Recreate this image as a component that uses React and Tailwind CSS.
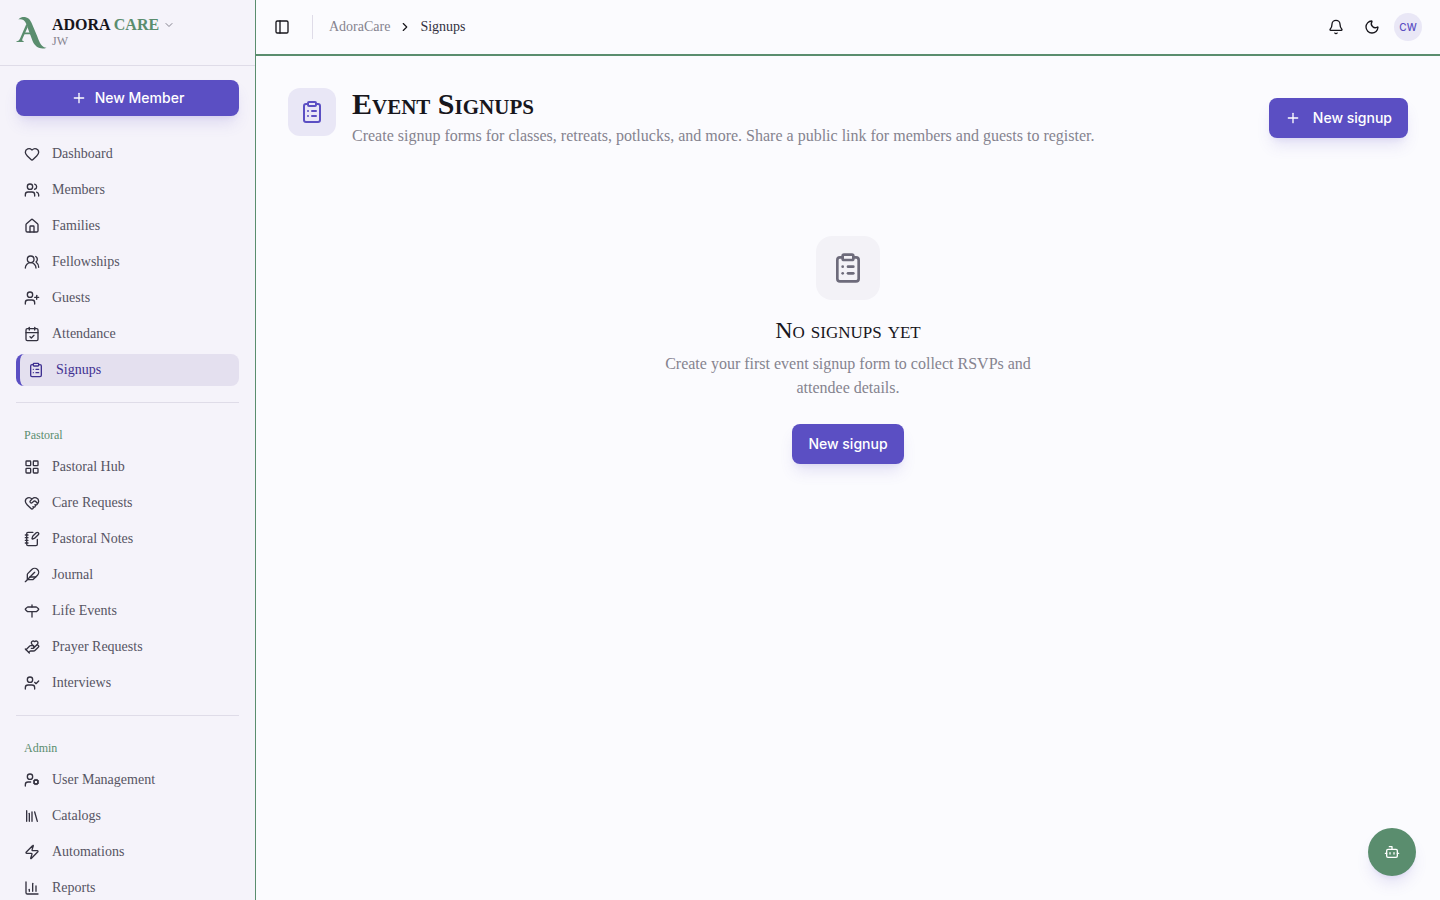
import React from 'react'
import {
  Heart, Users, House, UsersRound, UserPlus, CalendarCheck, ClipboardList,
  LayoutGrid, HeartHandshake, NotebookPen, Feather, Signpost, HandHeart, UserCheck,
  UserCog, Library, Zap, ChartColumn, PanelLeft, Bell, Moon, Bot,
  Plus, ChevronDown, ChevronRight,
} from 'lucide-react'

const mainLinks = [
  { label: 'Dashboard', icon: Heart },
  { label: 'Members', icon: Users },
  { label: 'Families', icon: House },
  { label: 'Fellowships', icon: UsersRound },
  { label: 'Guests', icon: UserPlus },
  { label: 'Attendance', icon: CalendarCheck },
  { label: 'Signups', icon: ClipboardList, active: true },
]

const pastoralLinks = [
  { label: 'Pastoral Hub', icon: LayoutGrid },
  { label: 'Care Requests', icon: HeartHandshake },
  { label: 'Pastoral Notes', icon: NotebookPen },
  { label: 'Journal', icon: Feather },
  { label: 'Life Events', icon: Signpost },
  { label: 'Prayer Requests', icon: HandHeart },
  { label: 'Interviews', icon: UserCheck },
]

const adminLinks = [
  { label: 'User Management', icon: UserCog },
  { label: 'Catalogs', icon: Library },
  { label: 'Automations', icon: Zap },
  { label: 'Reports', icon: ChartColumn },
]

function Logo() {
  return (
    <svg viewBox="0 0 32 33" className="h-8 w-8 shrink-0" fill="#5a8d6e" aria-hidden="true">
      <path d="M2 2.500C4 .2 7 -.2 9.500 .2C12.500 .8 14 2.500 15.500 6L21.500 20C24 27 26 31 31 31.600C26 33.800 19.500 32 16.500 24.500L10 7C8.500 3 5.500 1.800 2 2.500Z" />
      <path d="M10.300 7L11.500 10.500L6.200 22.500C5.500 24.300 6 24.700 7.500 25V25.800H0V25C2 24.700 2.900 24 3.700 22.200Z" />
      <path d="M7.500 16H15V17.900H6.800Z" />
    </svg>
  )
}

function NavLinks({ items }) {
  return (
    <ul className="flex flex-col gap-1">
      {items.map(({ label, icon: Icon, active }) => (
        <li key={label}>
          <a
            href="#"
            aria-current={active ? 'page' : undefined}
            className={
              active
                ? 'flex h-8 items-center gap-3 rounded-lg border-l-4 border-[#5b4fc3] bg-[#e4e0ef] px-2 text-[#3f3191]'
                : 'flex h-8 items-center gap-3 rounded-lg px-2 text-[#33313f]'
            }
          >
            <Icon size={16} className="shrink-0" />
            <span className={active ? 'text-sm' : 'text-sm text-[#565463]'}>{label}</span>
          </a>
        </li>
      ))}
    </ul>
  )
}

function NavGroup({ title, items }) {
  return (
    <div className="mt-4 border-t border-[#dfdce8] pt-4">
      <h2 className="flex h-8 items-center px-2 text-xs text-[#5a8d6e]">{title}</h2>
      <NavLinks items={items} />
    </div>
  )
}

function Sidebar() {
  return (
    <aside className="sticky top-0 h-screen w-64 shrink-0 overflow-hidden border-r border-[#5a8d6e] bg-[#f5f3fa]">
      <button type="button" className="flex h-[66px] w-full items-center gap-1 border-b border-[#dfdce8] px-4 text-left">
        <Logo />
        <span className="flex flex-col">
          <span className="flex items-center gap-1">
            <span className="text-base leading-4 font-bold text-[#17161c]">
              ADORA <span className="text-[#5a8d6e]">CARE</span>
            </span>
            <ChevronDown size={12} className="text-[#85838f]" />
          </span>
          <span className="text-xs leading-4 text-[#85838f]">JW</span>
        </span>
      </button>
      <div className="px-4 pt-[14px]">
        <button type="button" className="flex h-9 w-full items-center justify-center gap-2 rounded-lg bg-[#5b4fc3] font-['Inter',sans-serif] text-sm font-medium text-white shadow-lg shadow-[#5b4fc3]/15">
          <Plus size={16} />
          New Member
        </button>
        <nav className="pt-[22px]">
          <NavLinks items={mainLinks} />
          <NavGroup title="Pastoral" items={pastoralLinks} />
          <NavGroup title="Admin" items={adminLinks} />
        </nav>
      </div>
    </aside>
  )
}

function TopBar() {
  return (
    <header className="flex h-14 items-center justify-between border-b-2 border-[#5a8d6e] px-4 text-[#17161c]">
      <div className="flex items-center">
        <button type="button" aria-label="Toggle sidebar" className="-ml-1 flex h-7 w-7 items-center justify-center">
          <PanelLeft size={16} />
        </button>
        <div className="mx-4 h-6 w-px bg-[#dfdce8]" />
        <nav aria-label="Breadcrumb" className="flex items-center gap-2 text-sm">
          <a href="#" className="text-[#85838f]">AdoraCare</a>
          <ChevronRight size={14} />
          <span aria-current="page" className="text-[#33313f]">Signups</span>
        </nav>
      </div>
      <div className="flex items-center gap-2 pr-[2px]">
        <button type="button" aria-label="Notifications" className="flex h-7 w-7 items-center justify-center">
          <Bell size={16} />
        </button>
        <button type="button" aria-label="Dark mode" className="flex h-7 w-7 items-center justify-center">
          <Moon size={16} />
        </button>
        <button type="button" className="flex h-7 w-7 items-center justify-center rounded-full bg-[#e9e7f6] font-['Inter',sans-serif] text-[10px] font-medium text-[#5b4fc3]">
          CW
        </button>
      </div>
    </header>
  )
}

export default function App() {
  return (
    <div className="flex min-h-screen bg-[#fbfbfe] font-['Liberation_Serif',serif] text-[#17161c]">
      <Sidebar />
      <div className="min-w-0 flex-1">
        <TopBar />
        <main className="p-8">
          <div className="flex items-center justify-between gap-4">
            <div className="flex items-start gap-4">
              <div className="flex h-12 w-12 shrink-0 items-center justify-center rounded-xl bg-[#e9e7f6] text-[#5b4fc3]">
                <ClipboardList size={24} />
              </div>
              <div>
                <h1 className="text-3xl leading-8 font-bold [font-variant:small-caps]">Event Signups</h1>
                <p className="mt-1 text-base leading-6 text-[#85838f]">
                  Create signup forms for classes, retreats, potlucks, and more. Share a public link for members and guests to register.
                </p>
              </div>
            </div>
            <button type="button" className="flex h-10 shrink-0 items-center gap-3 rounded-lg bg-[#5b4fc3] px-4 font-['Inter',sans-serif] text-sm font-medium text-white shadow-lg shadow-[#5b4fc3]/15">
              <Plus size={16} />
              New signup
            </button>
          </div>

          <section className="flex flex-col items-center pt-[88px] text-center">
            <div className="flex h-16 w-16 items-center justify-center rounded-2xl bg-[#f3f2f7] text-[#6d6b7b]">
              <ClipboardList size={32} />
            </div>
            <h2 className="mt-4 text-2xl leading-7 [font-variant:small-caps]">No signups yet</h2>
            <p className="mt-2 max-w-96 text-base leading-6 text-[#85838f]">
              Create your first event signup form to collect RSVPs and attendee details.
            </p>
            <button type="button" className="mt-6 h-10 rounded-lg bg-[#5b4fc3] px-4 font-['Inter',sans-serif] text-sm font-medium text-white shadow-lg shadow-[#5b4fc3]/15">
              New signup
            </button>
          </section>
        </main>
      </div>
      <button type="button" aria-label="Open assistant" className="fixed right-6 bottom-6 flex h-12 w-12 items-center justify-center rounded-full bg-[#5a8d6e] text-white shadow-lg shadow-[#5b4fc3]/15">
        <Bot size={16} />
      </button>
    </div>
  )
}
